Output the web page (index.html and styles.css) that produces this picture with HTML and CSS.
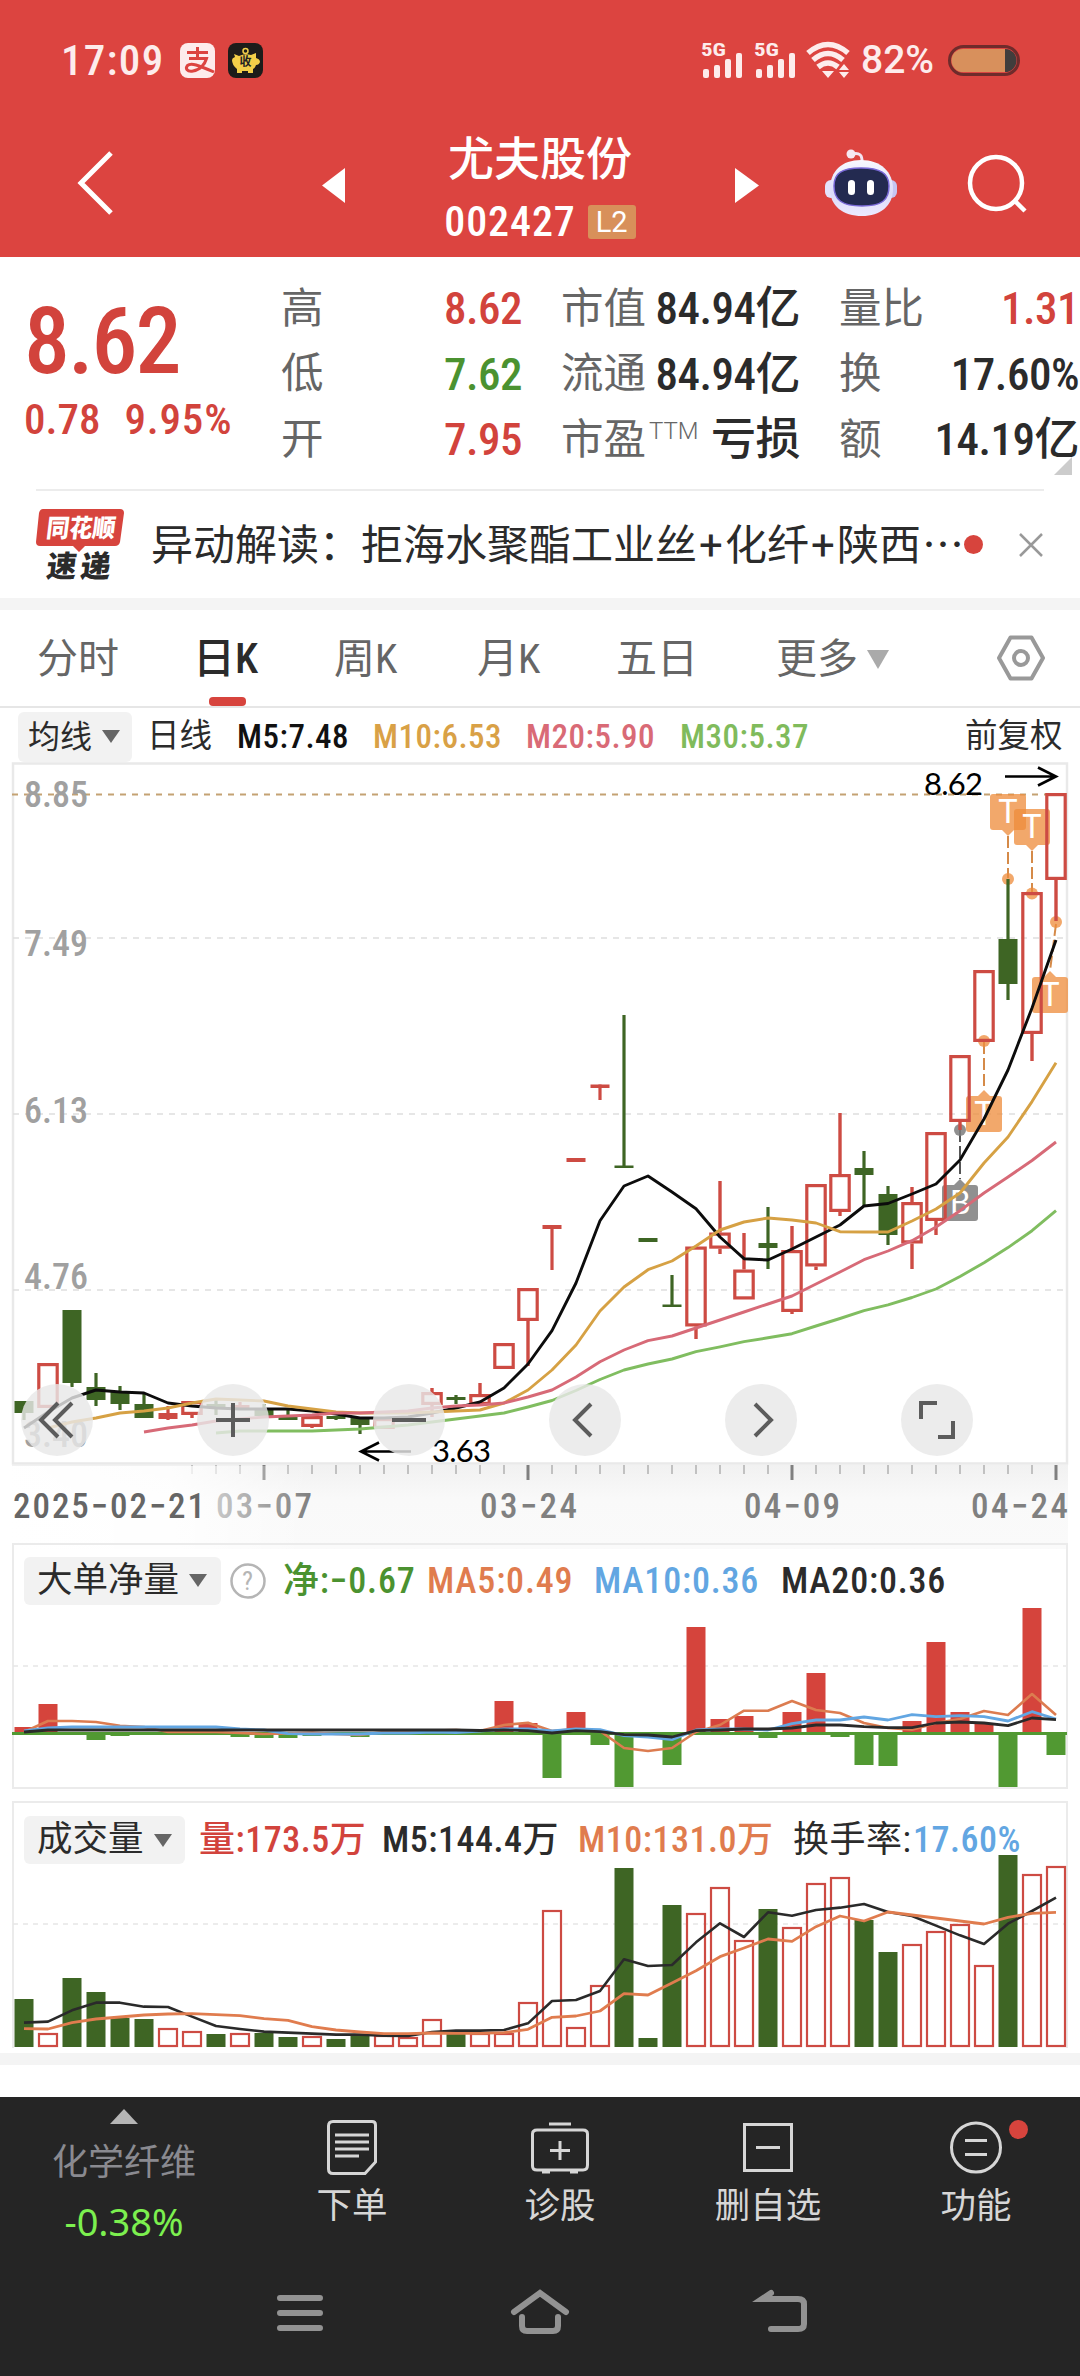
FILE: index.html
```html
<!DOCTYPE html>
<html lang="zh-CN">
<head>
<meta charset="utf-8">
<title>尤夫股份 002427</title>
<link rel="stylesheet" href="styles.css">
</head>
<body>
<header class="top">
  <div class="status">
    <span class="clock">17:09</span>
    <svg class="app-pay" width="35" height="35" viewBox="0 0 35 35"><rect width="35" height="35" rx="8" fill="#fdecec"/><g fill="none" stroke="#dc4440" stroke-width="3"><path d="M7 9.5H28M17.5 4V15M9 15.5H26.500C25 21 20 27 13 28C7 29 5 25.500 7.500 22.500C11 19.500 18 22 34 29"/></g></svg>
    <svg class="app-pig" width="35" height="35" viewBox="0 0 35 35"><rect width="35" height="35" rx="8" fill="#1d1c1a"/><circle cx="17.500" cy="8" r="2.500" fill="none" stroke="#f3cf49" stroke-width="1.500"/><path d="M6 11L11 13Q17 10 23 12L28 10L28 15Q32 16 32 19Q31 22 28 22Q27 25 25 26V30H20V28H14V30H9V26Q4 22 4 17Q4 15 7 14Z" fill="#f3cf49"/><text x="17.500" y="23" text-anchor="middle" class="pig-text">收</text></svg>
    <span class="grow"></span>
    <svg class="signals" width="150" height="38" viewBox="0 0 150 38">
      <g fill="#fdecec">
        <text x="0" y="15" class="five-g" textLength="25" lengthAdjust="spacingAndGlyphs">5G</text><rect x="2" y="28" width="6" height="9" rx="2"/><rect x="13" y="24" width="6" height="13" rx="2"/><rect x="24" y="18" width="6" height="19" rx="2"/><rect x="35" y="12" width="6" height="25" rx="2"/>
        <text x="53" y="15" class="five-g" textLength="25" lengthAdjust="spacingAndGlyphs">5G</text><rect x="55" y="28" width="6" height="9" rx="2"/><rect x="66" y="24" width="6" height="13" rx="2"/><rect x="77" y="18" width="6" height="19" rx="2"/><rect x="88" y="12" width="6" height="25" rx="2"/>
        <path d="M121 30H133L127 37ZM138 29L143 23L148 29ZM138 31H148L143 37Z"/>
      </g>
      <g fill="none" stroke="#fdecec" stroke-width="5.500"><path d="M107 12Q127 -5 147 12"/><path d="M112 19Q127 6 142 19"/><path d="M117 26Q127 18 137 26" /></g>
    </svg>
    <span class="battery-text">82%</span>
    <svg width="72" height="31" viewBox="0 0 72 31"><rect x="1.500" y="1.500" width="69" height="28" rx="14" fill="#dc4440" stroke="#6f2b2b" stroke-width="3"/><path d="M56 4V27H57A11.500 11.500 0 0 0 57 4Z" fill="#413d3c"/><path d="M15 4H57V27H15A11.500 11.500 0 0 1 15 4Z" fill="#d8905c"/></svg>
  </div>
  <div class="nav">
    <svg class="back" width="40" height="66" viewBox="0 0 40 66"><path d="M36 3L6 33L36 63" fill="none" stroke="#fff" stroke-width="5"/></svg>
    <svg class="prev" width="23" height="35" viewBox="0 0 23 35"><path d="M23 0V35L0 17.500Z" fill="#fff"/></svg>
    <div class="stock">
      <h1>尤夫股份</h1>
      <div class="code"><span>002427</span><b>L2</b></div>
    </div>
    <svg class="next" width="24" height="35" viewBox="0 0 24 35"><path d="M0 0V35L24 17.500Z" fill="#fff"/></svg>
    <svg class="robot" width="74" height="68" viewBox="0 0 74 68">
      <defs><linearGradient id="shell" x1="0" y1="0" x2="0" y2="1"><stop offset="0" stop-color="#f8f8ff"/><stop offset=".6" stop-color="#dcdcf8"/><stop offset="1" stop-color="#eceaff"/></linearGradient></defs>
      <path d="M27 5Q38 2 37 14" fill="none" stroke="#f3e4f2" stroke-width="3"/><circle cx="26" cy="5" r="4.500" fill="#f6e8f2"/>
      <rect x="0" y="31" width="12" height="18" rx="6" fill="#e4e3fb"/><rect x="60" y="31" width="12" height="18" rx="6" fill="#c6c6f1"/>
      <path d="M36 11C56 11 68 23 68 40C68 57 55 67 37 67C18 67 5 57 5 40C5 22 17 11 36 11Z" fill="url(#shell)"/>
      <path d="M36 19C55 19 64 24 64 37C64 51 57 57 37 57C17 57 9 51 9 37C9 24 17 19 36 19Z" fill="#232a50" stroke="#7868d6" stroke-width="1.500"/>
      <rect x="23" y="31" width="7" height="15" rx="3.500" fill="#fff"/><rect x="42" y="31" width="7" height="15" rx="3.500" fill="#fff"/>
    </svg>
    <svg class="search" width="62" height="62" viewBox="0 0 62 62"><circle cx="29" cy="29" r="26" fill="none" stroke="#fff" stroke-width="4.500"/><path d="M48 47L58 57" stroke="#fff" stroke-width="4.500"/></svg>
  </div>
</header>

<section class="quote">
  <div class="price">
    <div class="last">8.62</div>
    <div class="change"><span>0.78</span><span>9.95%</span></div>
  </div>
  <dl class="col c1">
    <dt>高</dt><dd class="up">8.62</dd>
    <dt>低</dt><dd class="down">7.62</dd>
    <dt>开</dt><dd class="up">7.95</dd>
  </dl>
  <dl class="col c2">
    <dt>市值</dt><dd>84.94亿</dd>
    <dt>流通</dt><dd>84.94亿</dd>
    <dt>市盈<sup>TTM</sup></dt><dd>亏损</dd>
  </dl>
  <dl class="col c3">
    <dt>量比</dt><dd class="up">1.31</dd>
    <dt>换</dt><dd>17.60%</dd>
    <dt>额</dt><dd>14.19亿</dd>
  </dl>
  <i class="corner"></i>
</section>

<section class="news">
  <svg width="90" height="74" viewBox="0 0 90 74">
    <path d="M7 1H84Q88 1 88 5L84 34Q83 38 79 38H49L43 44L37 38H4Q0 38 0 34L3 5Q4 1 7 1Z" fill="#d7443d"/>
    <text x="10" y="29" class="logo-a" textLength="69" lengthAdjust="spacingAndGlyphs" transform="skewX(-7) translate(3 0)">同花顺</text>
    <text x="10" y="69" class="logo-b" textLength="64" lengthAdjust="spacing" transform="skewX(-7) translate(8 0)">速递</text>
  </svg>
  <p>异动解读：拒海水聚酯工业丝<span class="plus">+</span>化纤<span class="plus">+</span>陕西<span class="dots">⋯</span></p>
  <i class="dot"></i>
  <svg class="close" width="26" height="26" viewBox="0 0 26 26"><path d="M2 2L24 24M24 2L2 24" stroke="#999" stroke-width="2.500"/></svg>
</section>

<nav class="tabs">
  <span>分时</span><span class="on">日K</span><span>周K</span><span>月K</span><span>五日</span><span>更多<svg width="22" height="19" viewBox="0 0 22 19"><path d="M0 0H22L11 19Z" fill="#aaa"/></svg></span>
  <svg class="hex" width="50" height="46" viewBox="0 0 50 46"><path d="M14.500 2.500H35.500L47 23L35.500 43.500H14.500L3 23Z" fill="none" stroke="#999" stroke-width="4" stroke-linejoin="round"/><circle cx="25" cy="23" r="7" fill="none" stroke="#999" stroke-width="4"/></svg>
</nav>

<section class="kline">
  <div class="legend ma">
    <span class="pick">均线<i></i></span><span class="dark">日线</span><span class="m5">M5:7.48</span><span class="m10">M10:6.53</span><span class="m20">M20:5.90</span><span class="m30">M30:5.37</span><span class="adj">前复权</span>
  </div>
  <div class="plot">
    <svg id="candles" width="1080" height="778" viewBox="0 762 1080 778"></svg>
    <div class="tools">
      <button><svg viewBox="0 0 72 72"><path d="M37 19L20 36L37 53M51 19L34 36L51 53"/></svg></button>
      <button><svg viewBox="0 0 72 72"><path d="M36 19V53M19 36H53"/></svg></button>
      <button><svg viewBox="0 0 72 72"><path d="M19 36H53"/></svg></button>
      <button><svg viewBox="0 0 72 72"><path d="M42 20L26 36L42 52"/></svg></button>
      <button><svg viewBox="0 0 72 72"><path d="M30 20L46 36L30 52"/></svg></button>
      <button><svg viewBox="0 0 72 72"><path d="M36 19H20V35M52 37V53H37"/></svg></button>
    </div>
  </div>
</section>

<section class="panel net">
  <div class="legend">
    <span class="pick">大单净量<i></i></span><svg class="help" width="36" height="36" viewBox="0 0 36 36"><circle cx="18" cy="18" r="16.500" fill="none" stroke="#b5b5b5" stroke-width="2.500"/><text x="18" y="27" text-anchor="middle">?</text></svg><span class="green">净:−0.67</span><span class="orange">MA5:0.49</span><span class="blue">MA10:0.36</span><span class="dark">MA20:0.36</span>
  </div>
  <svg id="flow" width="1080" height="182" viewBox="0 1607 1080 182"></svg>
</section>

<section class="panel vol">
  <div class="legend">
    <span class="pick">成交量<i></i></span><span class="red">量:173.5万</span><span class="dark">M5:144.4万</span><span class="orange">M10:131.0万</span><span class="dark rate">换手率:</span><span class="blue">17.60%</span>
  </div>
  <svg id="volume" width="1080" height="194" viewBox="0 1854 1080 194"></svg>
</section>

<footer>
  <div class="actions">
    <div class="sector"><i></i><span>化学纤维</span><b>-0.38%</b></div>
    <div class="act"><svg width="56" height="56" viewBox="0 0 56 56"><path d="M9 1.500H48Q51.500 1.500 51.500 5V42L41 53.500H9Q4.500 53.500 4.500 49V6Q4.500 1.500 9 1.500Z"/><path d="M11 15H45M11 22H45M11 29H45M11 36H35"/></svg>下单</div>
    <div class="act"><svg width="60" height="56" viewBox="0 0 60 56"><path d="M7 10H53Q57.500 10 57.500 14V45Q57.500 50 53 50H7Q2.500 50 2.500 46V14Q2.500 10 7 10ZM19 4H41M30 21V40M20 30.500H40M12 52H20M40 52H48"/></svg>诊股</div>
    <div class="act"><svg width="56" height="56" viewBox="0 0 56 56"><path d="M4.500 4.500H51.500V50.500H4.500ZM16 27.500H40"/></svg>删自选</div>
    <div class="act"><svg width="56" height="56" viewBox="0 0 56 56"><circle cx="28" cy="27.500" r="24.500"/><path d="M17 20.500H39M17 34.500H39"/></svg>功能<i class="dot"></i></div>
  </div>
  <div class="system">
    <svg width="60" height="48" viewBox="0 0 60 48"><path d="M10 8H50M10 23H50M10 38H50"/></svg>
    <svg width="64" height="48" viewBox="0 0 64 48"><path d="M6 22L32 3L58 22M14 27V36Q14 41 19 41H45Q50 41 50 36V27"/></svg>
    <svg width="64" height="48" viewBox="0 0 64 48"><path d="M21 3L12 9H48Q54 9 54 14V34Q54 39 48 39H21"/></svg>
  </div>
</footer>
<script src="script.js"></script>
</body>
</html>
```
FILE: styles.css
```css
* { box-sizing: border-box; margin: 0; padding: 0; }
body {
  width: 1080px; height: 2376px; display: flex; flex-direction: column;
  background: #fff; color: #2b2b2b; line-height: 1; white-space: nowrap; overflow: hidden;
  font-family: Roboto, "Noto Sans CJK SC", sans-serif; font-stretch: 80%; font-weight: 400;
}
svg { display: block; flex: none; overflow: visible; }
.grow { flex: 1; }
.up, .red { color: #d2433c; }
.down, .green { color: #4b9230; }
.dark { color: #2b2b2b; }
.orange { color: #e07c4e; }
.blue { color: #62a6e2; }

.top { height: 257px; background: #dc4440; color: #fff; padding-top: 41px; flex: none; }
.status { display: flex; align-items: center; height: 38px; padding: 0 60px 0 61px; color: #fdecec; }
.clock { font-size: 43px; font-weight: 500; width: 119px; letter-spacing: 1.300px; }
.app-pig { margin-left: 13px; }
.signals { margin-right: -1px; }
.pig-text { font-size: 12px; font-weight: 700; fill: #222; }
.five-g { font-size: 19px; font-weight: 700; }
.battery-text { font-size: 39px; font-weight: 500; width: 87px; margin-left: 11px; font-stretch: 92%; }

.nav { display: flex; padding-top: 55px; }
.back { margin: 16px 0 0 75px; }
.prev { margin: 34px 0 0 207px; }
.stock { width: 390px; display: flex; flex-direction: column; align-items: center; }
.stock h1 { font-size: 46px; font-weight: 500; line-height: 50px; }
.code { display: flex; align-items: center; gap: 12px; height: 36px; margin-top: 20px; }
.code span { font-size: 42px; font-weight: 500; letter-spacing: .9px; }
.code b { width: 48px; height: 34px; line-height: 35px; text-align: center; background: #d8905a; border-radius: 3px; font-size: 29px; font-weight: 400; font-stretch: 90%; }
.next { margin-top: 34px; }
.robot { margin: 15px 0 0 66px; }
.search { margin: 20px 0 0 68px; }

.quote { position: relative; height: 232px; display: flex; padding-top: 18px; flex: none; }
.price { width: 281px; padding-left: 24px; color: #d2433c; flex: none; }
.last { font-size: 92px; font-weight: 500; line-height: 96px; margin-top: 19px; letter-spacing: -2px; }
.change { display: flex; gap: 24px; font-size: 43px; font-weight: 500; margin-top: 8px; }
.change span + span { letter-spacing: .8px; }
.col { display: grid; grid-template-columns: 85px 1fr; grid-auto-rows: 65.500px; align-items: center; font-size: 42.500px; flex: none; padding-top: 1px; }
.col dt { color: #666; }
.col dd { font-size: 45px; font-weight: 500; letter-spacing: -.5px; justify-self: end; }
.c1 { width: 241px; }
.c2 { width: 239px; margin-left: 39px; }
.c3 { width: 240px; margin-left: 39px; }
.col sup { font-size: 24px; font-stretch: 95%; vertical-align: 15px; line-height: 0; margin-left: 3px; font-weight: 300; }
.corner { position: absolute; right: 8px; bottom: 14px; border-left: 18px solid transparent; border-bottom: 18px solid #ccc; }

.news { height: 109px; flex: none; margin: 0 36px; border-top: 2px solid #ececec; display: flex; align-items: center; }
.news p { font-size: 42px; margin-left: 25px; width: 816px; color: #2b2b2b; padding-top: 2px; }
.plus { display: inline-block; width: 28px; text-align: center; font-stretch: 100%; }
.dots { margin-left: 1px; display: inline-block; width: 40px; }
.logo-a { font-size: 25px; font-weight: 900; fill: #fff; }
.logo-b { font-size: 30px; font-weight: 900; fill: #2b2b2b; }
.dot { width: 19px; height: 19px; border-radius: 50%; background: #d7443d; flex: none; }
.close { margin-left: 35px; }

.tabs { height: 110px; border-top: 12px solid #f4f4f4; border-bottom: 2px solid #e6e6e6; display: grid; grid-template-columns: 156px 141px 143px 139px 160px 220px 50px; padding-left: 37px; align-items: center; font-size: 41px; color: #666; flex: none; }
.tabs span { display: flex; align-items: center; height: 96px; position: relative; padding-top: 2px; }
.tabs span svg { margin-left: 9px; }
.tabs .on { color: #2b2b2b; font-weight: 500; font-size: 42px; }
.tabs .on::after { content: ""; position: absolute; left: 16px; bottom: 0; width: 37px; height: 9px; border-radius: 4px; background: #d7443d; }

.legend { display: grid; align-items: center; font-size: 36px; font-weight: 500; letter-spacing: .8px; }
.pick { display: flex; align-items: center; background: #f2f2f2; border-radius: 6px; font-weight: 400; color: #2b2b2b; letter-spacing: 0; }
.pick i { border: 9px solid transparent; border-top: 13px solid #666; border-bottom: 0; margin-left: 10px; }
.ma { height: 54px; font-size: 33px; grid-template-columns: 129px 90px 136px 153px 154px 285px auto; padding: 3px 0 0 18px; letter-spacing: .5px; }
.ma .pick { height: 50px; width: 114px; padding-left: 10px; font-size: 32px; }
.ma .dark, .ma .adj { font-weight: 400; font-size: 32.500px; letter-spacing: 0; }
.m5 { color: #111; }
.m10 { color: #d9a146; }
.m20 { color: #d96a76; }
.m30 { color: #80bb5c; }
.plot { position: relative; height: 778px; }
.tools { position: absolute; left: 21px; top: 622px; display: flex; gap: 104px; }
.tools button { width: 72px; height: 72px; border: 0; border-radius: 50%; background: rgba(232, 232, 232, .82); }
.tools path { fill: none; stroke: #5c5c5c; stroke-width: 4; }

.grid-text { font-size: 36px; font-weight: 500; fill: #a0a0a0; }
.mark-text { font-family: Lato, sans-serif; font-size: 31px; fill: #000; }
.date { font-size: 35px; font-weight: 500; }
.tag-text { font-family: Lato, sans-serif; font-size: 32px; fill: #fff; }

.panel { position: relative; margin: 0 12px; border: 2px solid #ebebeb; flex: none; }
.panel > svg { margin-left: -14px; }
.panel .legend { justify-content: start; }
.net { margin-top: 3px; height: 246px; }
.net .legend { height: 62px; padding: 9px 0 0 10px; grid-template-columns: 206px 53px 144px 167px 187px auto; }
.net .pick { height: 48px; width: 197px; padding-left: 13px; font-size: 35.500px; }
.help text { font-size: 26px; fill: #b5b5b5; font-weight: 400; }
.vol { margin-top: 12px; height: 247px; border-bottom: 0; }
.vol .legend { height: 51px; padding: 13px 0 0 10px; grid-template-columns: 175px 183px 196px 215px 120px auto; letter-spacing: .5px; }
.vol .pick { height: 48px; width: 161px; padding-left: 13px; font-size: 35.500px; }
.vol .rate { font-weight: 400; }

footer { margin-top: 5px; border-top: 12px solid #f4f4f4; flex: 1; display: flex; flex-direction: column; }
.actions { margin-top: 32px; background: #252525; display: grid; grid-template-columns: 248px 208px 208px 208px 208px; height: 170px; flex: none; }
.sector { display: flex; flex-direction: column; align-items: center; color: #8a8a90; font-size: 36px; }
.sector i { border: 14px solid transparent; border-bottom: 15px solid #b5b5b5; border-top: 0; margin-top: 12px; }
.sector span { margin-top: 21px; }
.sector b { font: 400 38px/1 "Noto Sans", sans-serif; color: #7cf04f; margin-top: 21px; }
.act { position: relative; display: flex; flex-direction: column; align-items: center; font-size: 35.500px; color: #d6d6d6; padding-top: 23px; gap: 13px; }
.act svg { fill: none; stroke: #d6d6d6; stroke-width: 3; }
.act .dot { position: absolute; left: 137px; top: 23px; }
.system { background: #252525; flex: 1; display: flex; justify-content: center; gap: 178px; padding: 23px 0 0 4px; }
.system svg { fill: none; stroke: #929292; stroke-width: 6; stroke-linecap: round; }
```
FILE: script.js
```js
const x = i => 24 + 24 * i;
const RED = '#cd4b43', GREEN = '#3e6524';
const rect = (l, t, w, h, a) => `<rect x="${l}" y="${t}" width="${w}" height="${h}" ${a}/>`;
const line = (x1, y1, x2, y2, c, w, more = '') => `<line x1="${x1}" y1="${y1}" x2="${x2}" y2="${y2}" stroke="${c}" stroke-width="${w}" ${more}/>`;
const curve = (start, ys, c, w) => `<polyline fill="none" stroke="${c}" stroke-width="${w}" stroke-linejoin="round" points="${ys.map((y, k) => x(start + k) + ',' + y).join(' ')}"/>`;

// kind (g solid green, r hollow red, s solid red), body top, body bottom, wick top, wick bottom
const candles = [
  ['g',1401,1413,1401,1420],['r',1363,1408],['g',1310,1383,1310,1387],['g',1387,1400,1373,1406],['g',1392,1404,1386,1410],
  ['g',1404,1418,1394,1418],['s',1413,1419,1406,1420],['r',1401,1415,1401,1418],['g',1404,1407,1400,1415],['s',1405,1408,1402,1410],
  ['g',1409,1416,1404,1416],['g',1417,1420,1410,1420],['r',1416,1427,1416,1428],['g',1416,1419,1416,1420],['g',1418,1425,1418,1434],
  ['r',1418,1429],['s',1411,1414],['r',1392,1405,1388,1417],['g',1397,1400,1395,1404],['r',1394,1405,1383,1405],
  ['r',1343,1369],['r',1288,1321,1288,1366],['s',1225,1229,1225,1270],['s',1158,1162],['s',1084.5,1088,1084.5,1100],
  ['g',1165.5,1168,1015,1168],['g',1238,1242],['g',1304.5,1307,1275,1307],['r',1246.5,1326.5,1246,1339],['r',1232.5,1248.7,1181,1254],
  ['r',1269.5,1299.5,1233,1299],['g',1243,1248,1207,1269],['r',1250,1312,1226,1314],['r',1184,1266.5,1184,1270],['r',1174,1212,1113,1216],
  ['g',1168,1175,1151,1206],['g',1194,1235,1186,1245],['r',1202,1243.5,1187,1269],['r',1132,1221,1132,1235],['r',1055,1122,1055,1130],
  ['r',970,1042],['g',939,984,879,1000],['r',892,1034,892,1061],['r',793,880,793,921]
];
const ma5 = [1428,1412,1398,1390,1392,1393,1403,1406,1408,1409,1409,1409,1411,1414,1418,1418,1417,1413,1408,1402,1388,1364,1330.7,1283,1220.7,1186,1176,1192,1208.7,1237,1258.7,1260,1249,1237,1225,1206,1203.5,1194,1184,1160,1119,1070,1008,940];
const ma10 = [1428,1422,1418,1413,1411,1408,1403,1399,1400,1401,1406,1409,1412,1413,1413,1413,1412,1411,1410,1403,1390,1370,1345,1311,1287,1269.7,1261,1246,1230,1222,1218,1220,1223,1231.7,1232,1232,1221,1209,1193,1163,1137,1101.6,1062.7];
const ma20 = [1432,1428,1425,1421,1419,1417,1416,1415,1413,1413,1412,1411,1408,1406,1405,1403,1397,1390,1377,1361.7,1350,1340.7,1336,1328,1320,1312,1304,1296,1284,1272,1259.7,1251,1240.7,1227,1210.7,1193,1177,1160.5,1142];
const ma30 = [1433,1431,1431,1431,1431,1430,1429,1427,1425,1422,1419,1416,1413,1407,1400.5,1390.5,1379.5,1370,1364,1359,1351.6,1346.8,1341.6,1337.8,1333.7,1326,1318.5,1310.6,1304.8,1297.5,1289,1276.5,1262.7,1247.6,1230.7,1210.7];

const text = (s, tx, ty, w, cls, more = '') => `<text x="${tx}" y="${ty}" textLength="${w}" class="${cls}" ${more}>${s}</text>`;
const tag = (l, t, ch, c, tip) => rect(l, t, 36, 36, `rx="3" fill="${c}"`) +
  (tip === 'down' ? `<path d="M${l + 12} ${t + 36}h12l-6 6z" fill="${c}"/>` : `<path d="M${l + 12} ${t}h12l-6 -6z" fill="${c}"/>`) +
  `<text x="${l + 18}" y="${t + 29}" text-anchor="middle" class="tag-text">${ch}</text>`;
const O = 'rgba(238,140,60,.76)', G = 'rgba(125,125,125,.85)';

let k = `<defs>
<linearGradient id="axis" x1="0" y1="0" x2="0" y2="1"><stop offset="0" stop-color="#f1f1f1"/><stop offset=".4" stop-color="#f9f9f9"/><stop offset="1" stop-color="#fafafa"/></linearGradient>
<linearGradient id="fade"><stop offset="0" stop-color="#fff"/><stop offset=".55" stop-color="#fff" stop-opacity=".85"/><stop offset="1" stop-color="#fff" stop-opacity="0"/></linearGradient></defs>`;
k += rect(12, 1465, 1056, 84, 'fill="url(#axis)"');
for (let i = 7; i < 44; i++) {
  const major = (i - 10) % 11 === 0;
  k += line(x(i), 1465, x(i), major ? 1480 : 1474, major ? '#808080' : '#a0a0a0', major ? 3 : 1.2);
}
k += text('03−07', 216, 1518, 96, 'date', 'fill="#808080"') + text('03−24', 480, 1518, 97, 'date', 'fill="#808080"') +
  text('04−09', 744, 1518, 96, 'date', 'fill="#808080"') + text('04−24', 971, 1518, 97, 'date', 'fill="#808080"');
k += rect(0, 1466, 310, 83, 'fill="url(#fade)"') + text('2025−02−21', 13, 1518, 192, 'date', 'fill="#666"');
k += rect(13, 763.5, 1054, 700, 'fill="none" stroke="#e9e9e9" stroke-width="2.5"');
[938, 1114, 1290].forEach(y => k += line(13, y, 1066, y, '#dedede', 1.5, 'stroke-dasharray="6 6"'));
k += line(12, 794.5, 1055, 794.5, '#c4a273', 2, 'stroke-dasharray="6 6"');
[['8.85', 807], ['7.49', 956], ['6.13', 1123], ['4.76', 1289], ['3.40', 1447]].forEach(([s, y]) => k += text(s, 24, y, 64, 'grid-text'));

// trade tags
k += line(1008, 836, 1008, 878, '#d58a48', 2, 'stroke-dasharray="12 4"') + line(1032, 851, 1032, 892, '#d58a48', 2, 'stroke-dasharray="12 4"');
k += line(1056, 924, 1050, 971, '#d58a48', 2, 'stroke-dasharray="12 4"') + line(984, 1042, 984, 1090, '#d58a48', 2, 'stroke-dasharray="12 4"');
k += line(960, 1130, 960, 1179, '#555', 2, 'stroke-dasharray="12 4"');
[[1008, 879], [1032, 893.5], [1056, 922], [984, 1041]].forEach(([a, b]) => k += `<circle cx="${a}" cy="${b}" r="6" fill="${O}"/>`);
k += `<circle cx="960" cy="1130" r="6" fill="${G}"/>`;
k += tag(990, 794, 'T', O, 'down') + tag(1014, 809, 'T', O, 'down') + tag(1032, 977, 'T', O, 'up') + tag(966, 1096, 'T', O, 'up') + tag(942, 1185, 'B', G, 'up');

candles.forEach(([t, top, bot, wt, wb], i) => {
  const c = t === 'g' ? GREEN : RED, h = bot - top;
  if (t === 'r') {
    if (wt < top) k += line(x(i), wt, x(i), top, c, 3.4);
    if (wb > bot) k += line(x(i), bot, x(i), wb, c, 3.4);
    k += rect(x(i) - 9.2, top + 1.6, 18.4, h - 3.2, `fill="none" stroke="${c}" stroke-width="3.2"`);
  } else {
    if (wt !== undefined) k += line(x(i), wt, x(i), wb, c, 3.2);
    k += rect(x(i) - 9.5, top, 19, h, `fill="${c}"`);
  }
});
k += curve(0, ma5, '#0c0c0c', 2.9) + curve(1, ma10, '#d6a144', 2.9) + curve(5, ma20, '#d76a77', 2.9) + curve(8, ma30, '#80bd60', 2.9);
k += text('8.62', 924, 795, 59, 'mark-text') + text('3.63', 432, 1462, 59, 'mark-text');
k += '<path d="M1005 776.500H1056M1038 767.500L1056 776.500L1038 785.500M411 1451.500H361M379 1442.500L361 1451.500L379 1460.500" fill="none" stroke="#000" stroke-width="2.6"/>';
document.getElementById('candles').innerHTML = k;

// large-order net flow: bar end positions, missing days are flat
const flow = {0:1727,1:1704,3:1740,4:1736,9:1737,10:1738,11:1738,12:1736,14:1737,20:1701,21:1723,22:1778,23:1712,24:1745,25:1787,27:1765,28:1627,29:1719,30:1716,31:1738,32:1712,33:1673,34:1737,35:1765,36:1766,37:1721,38:1642,39:1712,40:1724,41:1787,42:1608,43:1755};
let f = line(13, 1666, 1066, 1666, '#e6e6e6', 1.6, 'stroke-dasharray="5 5"');
Object.entries(flow).forEach(([i, y]) => {
  const l = x(+i) - 9.5;
  f += y < 1733 ? rect(l, y, 19, 1733 - y, 'fill="#d5443c"') : rect(l, 1733, 19, y - 1733, 'fill="#519932"');
});
f += rect(12, 1732, 1055, 3, 'fill="#519932"');
f += curve(0, [1732,1721,1721,1722,1725.7,1727,1732,1732,1732,1733,1734,1733.5,1732.5,1734,1735,1732,1731.5,1730.5,1730,1731,1725,1722.7,1731,1729,1731,1748,1751,1748,1732,1725,1710.7,1710.7,1701,1710,1713,1723,1728,1729.7,1723,1719,1711,1715,1694,1715], '#dc7c50', 2.6);
f += curve(0, [1731,1728,1727,1727,1727,1727,1727,1727,1727,1729,1730,1733.7,1734,1734,1734,1733,1733,1732,1732.5,1731,1729,1729,1731,1729,1729.7,1735.7,1737,1739.7,1730,1729,1729,1730,1723.7,1720,1720,1717,1720,1714.7,1716.7,1715.7,1716.7,1721,1711.7,1719], '#62a6e2', 2.8);
f += curve(0, [1732,1730,1730,1730,1730,1730,1730,1730,1730,1730,1730,1730,1730,1730,1730,1730,1730,1730,1730,1730.5,1730,1730.7,1733,1730.7,1731.7,1734.7,1735,1737,1730.7,1730,1729,1729,1728,1725,1725,1726.7,1727.7,1727.7,1723,1722,1723,1725.7,1718,1719.7], '#2a2a2a', 2.8);
document.getElementById('flow').innerHTML = f;

// volume bars: g = down day, r = up day, value is the bar height
const vol = 'g48 r14 g69 g55 g29 g28 r19 r16 g13 r14 g14 g10 r11 g8 g12 r12 r10 r28 g13 r14 r14 r45 r137 r20 r62 g179 g9 g142 r134 r160 r107 g138 r120 r164 r170 g127 g95 r103 r116 r123 r82 g192 r173 r181'.split(' ');
let v = line(13, 1924, 1066, 1924, '#e6e6e6', 1.6, 'stroke-dasharray="5 5"');
vol.forEach((d, i) => {
  const h = +d.slice(1);
  v += d[0] === 'g' ? rect(x(i) - 9.5, 2047 - h, 19, h, `fill="${GREEN}"`)
    : rect(x(i) - 9, 2048 - h, 18, h - 2, `fill="none" stroke="${RED}" stroke-width="2.2"`);
});
const third = a => a.map(n => 1790 + n / 3);
v += curve(0, third([698,695,661,638,638,650,651,680,708,717,725,728,731,734,734,737,738,726,722,722,720,700,633,630,603,508,528,525,457,400,441,367,377,360,353,342,366,378,407,436,462,401,363,323]), '#2a2a2a', 2.6);
v += curve(0, third([716,717,698,687,681,675,672,671,674,677,686,691,710,720,726,731,731,729,730,730,728,718,682,678,663,611,615,579,542,500,474,447,454,410,378,393,366,375,384,393,402,382,370,367]), '#e07c4e', 2.8);
document.getElementById('volume').innerHTML = v;
```
